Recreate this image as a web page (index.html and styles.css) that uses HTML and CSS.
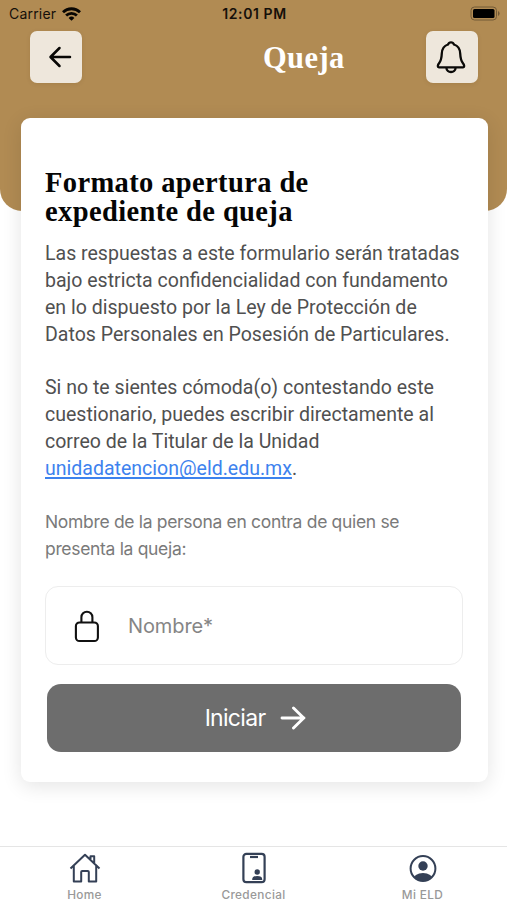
FILE: index.html
```html
<!DOCTYPE html>
<html lang="es">
<head>
<meta charset="utf-8">
<title>Queja</title>
<link rel="stylesheet" href="styles.css">
</head>
<body>
<header class="header">
  <div class="status">
    <div class="carrier"><span>Carrier</span>
      <svg width="19" height="14" viewBox="0 0 19 14"><g fill="none" stroke="#080603" stroke-width="2.8"><path d="M1 5.200a12.200 12.200 0 0 1 17 0"/><path d="M4.100 8.600a7.800 7.800 0 0 1 10.800 0"/></g><path d="M9.500 13.800 6.600 10.900a4.200 4.200 0 0 1 5.800 0z" fill="#080603"/></svg>
    </div>
    <div class="clock">12:01 PM</div>
    <svg class="battery" width="31" height="15" viewBox="0 0 31 15"><rect x="1" y="1" width="25.5" height="13" rx="3.5" fill="none" stroke="#735a37"/><rect x="3" y="3" width="21.5" height="9" rx="1.5"/><path d="M28 5v5q1.600-.8 1.600-2.500T28 5z" fill="#735a37"/></svg>
  </div>
  <div class="toolbar">
    <button class="square" aria-label="Volver"><svg class="back" width="24" height="22" viewBox="0 0 24 22"><path d="M22 11H3M11.500 2 2.500 11l9 9" fill="none" stroke="#080705" stroke-width="2.500" stroke-linecap="round" stroke-linejoin="round"/></svg></button>
    <h1 class="screen-title">Queja</h1>
    <button class="square" aria-label="Notificaciones"><svg class="bell" width="30" height="34" viewBox="0 0 30 34"><path d="M15 2.300c-1.500 0-2.500.8-3 2.200C8.200 5.700 6 9 5.800 13.500c-.2 4-.6 7-2.600 9.500-1.600 2-2 4.300 0 4.300h23.600c2 0 1.600-2.300 0-4.300-2-2.500-2.400-5.500-2.600-9.500C24 9 21.800 5.700 18 4.500c-.5-1.400-1.500-2.200-3-2.200zM10.300 27.500c.3 6 9.100 6 9.400 0" fill="none" stroke="#0b0a08" stroke-width="2.300" stroke-linejoin="round"/></svg></button>
  </div>
</header>
<main class="card">
  <h2 class="card-title">Formato apertura de<br>expediente de queja</h2>
  <p class="copy">Las respuestas a este formulario serán tratadas<br>bajo estricta confidencialidad con fundamento<br>en lo dispuesto por la Ley de Protección de<br>Datos Personales en Posesión de Particulares.</p>
  <p class="copy second">Si no te sientes cómoda(o) contestando este<br>cuestionario, puedes escribir directamente al<br>correo de la Titular de la Unidad<br><a class="mail" href="mailto:unidadatencion@eld.edu.mx">unidadatencion@eld.edu.mx</a>.</p>
  <p class="label">Nombre de la persona en contra de quien se<br>presenta la queja:</p>
  <div class="field">
    <svg width="26" height="34" viewBox="0 0 26 34"><path d="M7.400 13.500V8.200a5.500 5.500 0 0 1 11 0v5.300" fill="none" stroke="#111" stroke-width="2.100"/><rect x="1.900" y="13.500" width="22" height="18.500" rx="3.600" fill="none" stroke="#111" stroke-width="2.100"/></svg>
    <span class="placeholder">Nombre*</span>
  </div>
  <button class="start"><span>Iniciar</span><svg width="26" height="24" viewBox="0 0 26 24"><path d="M2 12h22M13.500 2l10.200 10-10.200 10" fill="none" stroke="#fff" stroke-width="2.900" stroke-linecap="round" stroke-linejoin="round"/></svg></button>
</main>
<nav class="tabs">
  <a class="tab"><svg width="32" height="32" viewBox="0 0 32 32"><g fill="none" stroke="#344056" stroke-width="2" stroke-linejoin="round"><path d="M1.500 16.500 16 2.800l14.500 13.700M4.800 14v15.500h7.400V20q0-1 1-1h5.600q1 0 1 1v9.500h7.400V14M21.500 8V4.300h3.700v7.200"/></g></svg><span>Home</span></a>
  <a class="tab"><svg width="32" height="32" viewBox="0 0 32 32"><rect x="5.400" y="1.800" width="21.200" height="28.400" rx="3" fill="none" stroke="#344056" stroke-width="2.200"/><path d="M12 5h8" stroke="#344056" stroke-width="2.200"/><circle cx="19.200" cy="20" r="2.700" fill="#344056"/><path d="M14.200 28v-.7q0-3.300 5-3.300t5 3.300v.7z" fill="#344056"/></svg><span>Credencial</span></a>
  <a class="tab"><svg width="32" height="32" viewBox="0 0 32 32"><defs><clipPath id="disc"><circle cx="16" cy="16.500" r="12.500"/></clipPath></defs><circle cx="16" cy="16.500" r="12.400" fill="none" stroke="#344056" stroke-width="2"/><circle cx="16" cy="14" r="4.700" fill="#344056"/><ellipse cx="16" cy="27.500" rx="10" ry="6.500" fill="#344056" clip-path="url(#disc)"/></svg><span>Mi ELD</span></a>
</nav>
</body>
</html>
```
FILE: styles.css
```css
* { box-sizing: border-box; }
body { margin: 0; height: 900px; display: flex; flex-direction: column; background: #fff; font-family: Inter, "Liberation Sans", sans-serif; }
h1, h2, p { margin: 0; }
button { border: 0; padding: 0; font: inherit; }
svg { display: block; flex: none; }
.header { height: 211px; flex: none; background: #b18b53; border-radius: 0 0 22px 22px; }
.status { height: 31px; padding: 0 6px 4px 9px; display: grid; grid-template-columns: 1fr auto 1fr; align-items: center; color: #15100a; font-size: 14px; }
.carrier { display: flex; align-items: center; gap: 6px; letter-spacing: .2px; }
.clock { font-weight: 600; letter-spacing: .6px; margin-right: 1px; }
.battery { justify-self: end; }
.toolbar { display: flex; align-items: center; justify-content: space-between; padding: 0 29px 0 30px; }
.square { width: 52px; height: 52px; border-radius: 7px; background: #eee7dc; display: flex; align-items: center; justify-content: center; box-shadow: 0 1px 4px rgba(80, 50, 10, .12); }
.back { margin-left: 7px; }
.bell { margin-right: 3px; }
.screen-title { color: #fff; font: bold 30.500px/34px "Liberation Serif", serif; letter-spacing: .4px; margin: 2px auto 0 181px; }
.card { width: 467px; height: 664px; flex: none; margin: -93px 0 0 20.500px; padding: 50px 24px 0 24.500px; background: #fff; border-radius: 9px; box-shadow: 0 4px 20px rgba(0, 0, 0, .11); }
.card-title { font: bold 28.500px/29px "Liberation Serif", serif; letter-spacing: .38px; color: #050505; white-space: nowrap; }
.copy { margin-top: 15px; font: 19.550px/26.850px Roboto, sans-serif; color: #505050; white-space: nowrap; }
.second { margin-top: 27px; }
.mail { color: #3d82ee; text-decoration: underline; text-underline-offset: 2px; text-decoration-thickness: 1.500px; text-decoration-skip-ink: none; }
.label { margin-top: 26.500px; font-size: 17.500px; line-height: 26.800px; letter-spacing: -.32px; color: #7a7a7a; white-space: nowrap; }
.field { width: 418px; height: 79px; margin-top: 23.500px; padding-left: 28px; border: 1.500px solid #ededed; border-radius: 13px; display: flex; align-items: center; gap: 28px; }
.placeholder { font-size: 20px; letter-spacing: -.1px; color: #858585; }
.start { width: 414px; height: 68px; margin: 19px 0 0 2px; padding-left: 3px; display: flex; align-items: center; justify-content: center; gap: 15px; border-radius: 14px; background: #6d6d6d; color: #fff; font-size: 23px; letter-spacing: -.7px; }
.tabs { height: 54px; flex: none; margin-top: auto; border-top: 1px solid #e5e5e5; display: grid; grid-template-columns: repeat(3, 1fr); }
.tab { display: flex; flex-direction: column; align-items: center; padding-top: 5px; color: #999; font-size: 11.800px; font-weight: 500; line-height: 14px; letter-spacing: .35px; }
.tab span { height: 12px; margin-top: 4px; }
```
